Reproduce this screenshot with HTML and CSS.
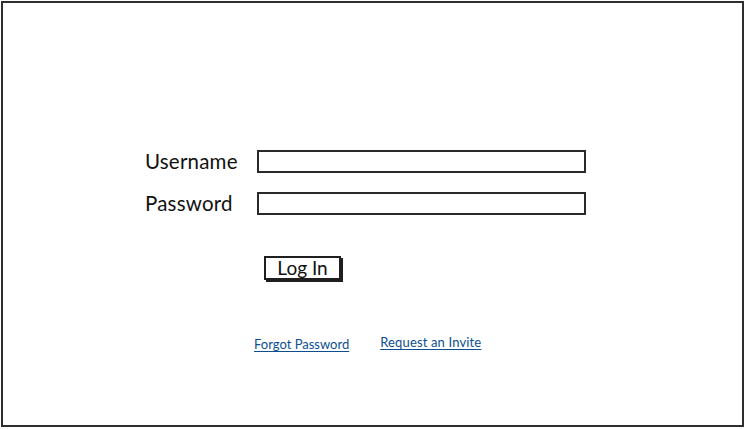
FILE: index.html
```html
<!DOCTYPE html>
<html>
<head>
<meta charset="utf-8">
<link rel="stylesheet" href="styles.css">
</head>
<body>
<div class="frame">
  <form class="login">
    <div class="row">
      <label class="label">Username</label>
      <div class="field"></div>
    </div>
    <div class="row">
      <label class="label">Password</label>
      <div class="field"></div>
    </div>
    <div class="actions">
      <span class="button">Log In</span>
    </div>
    <div class="links">
      <a class="link" href="#">Forgot Password</a>
      <a class="link link-invite" href="#">Request an Invite</a>
    </div>
  </form>
</div>
</body>
</html>
```

FILE: styles.css
```css
html, body {
  margin: 0;
  padding: 0;
  background: #ffffff;
}
body {
  width: 745px;
  height: 429px;
  overflow: hidden;
  font-family: Lato, "Noto Sans", sans-serif;
  color: #111;
}
.frame {
  box-sizing: border-box;
  margin: 1px 0 0 1px;
  width: 743px;
  height: 426px;
  border: 2px solid #2e2e2e;
  padding: 147px 0 0 142px;
}
.login {
  display: flex;
  flex-direction: column;
  margin: 0;
}
.row {
  display: flex;
  align-items: center;
  height: 23px;
  margin-bottom: 19px;
}
.label {
  width: 112px;
  font-size: 20.5px;
  line-height: 23px;
  letter-spacing: 0.2px;
}
.field {
  box-sizing: border-box;
  width: 329px;
  height: 23px;
  border: 2px solid #2a2a2a;
  background: #fff;
}
.actions {
  padding: 22px 0 0 119px;
  height: 40px;
}
.button {
  display: inline-block;
  box-sizing: border-box;
  width: 77px;
  height: 24px;
  border: 2px solid #1f1f1f;
  box-shadow: 2px 2px 0 #1f1f1f;
  text-align: center;
  font-size: 19px;
  line-height: 20px;
}
.links {
  display: flex;
  padding: 40px 0 0 109px;
}
.link {
  font-size: 13px;
  color: #0b4f91;
  text-decoration: underline;
  text-underline-offset: 2px;
  text-decoration-thickness: 1px;
}
.link-invite {
  margin-left: 31px;
  letter-spacing: 0.15px;
  position: relative;
  top: -2px;
}
```
